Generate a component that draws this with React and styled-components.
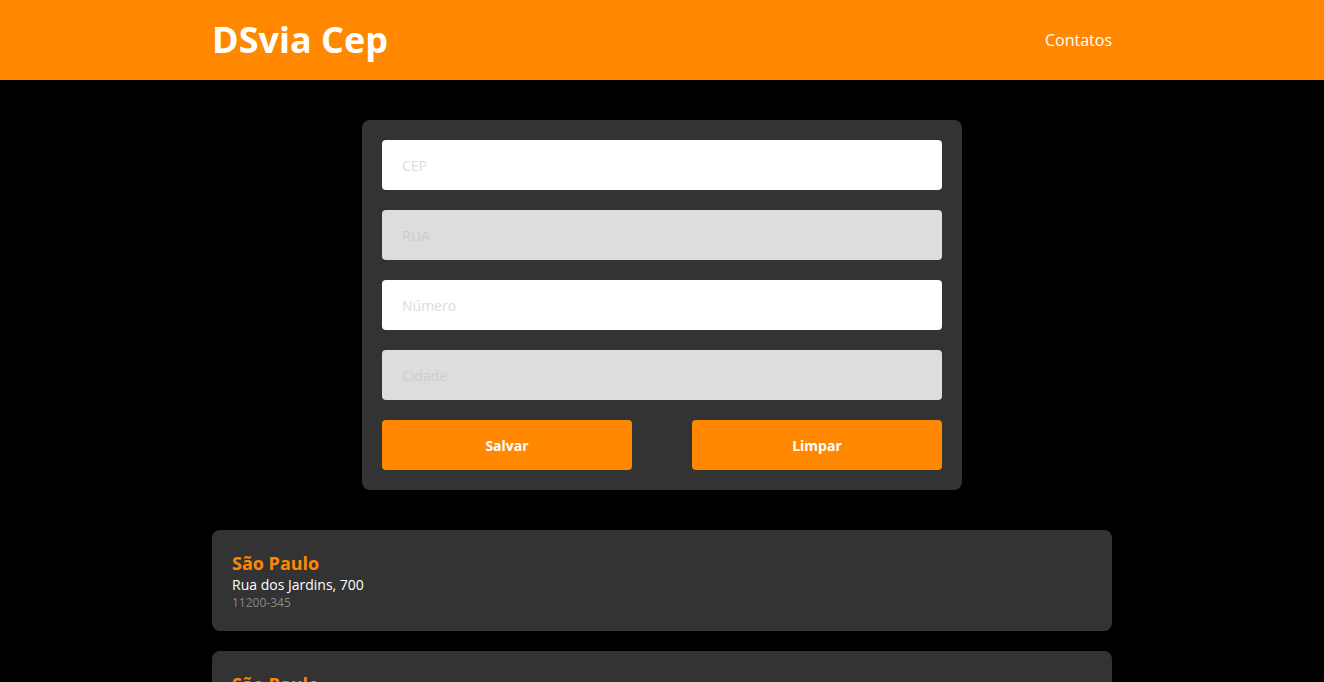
import React from 'react'
import styled, { createGlobalStyle } from 'styled-components'

const GlobalStyle = createGlobalStyle`
	* {
		margin: 0;
		padding: 0;
		box-sizing: border-box;
	}

	body {
		background-color: #000;
		font-family: 'Open Sans', 'Noto Sans', sans-serif;
		color: #fff;
	}
`

const contatos = [
	{ cidade: 'São Paulo', rua: 'Rua dos Jardins, 700', cep: '11200-345' },
	{ cidade: 'São Paulo', rua: 'Rua dos Jardins, 700', cep: '11200-345' }
]

const App = () => {
	return (
		<>
			<GlobalStyle />
			<Header>
				<div className="container">
					<h1>DSvia Cep</h1>
					<nav>
						<a href="#">Contatos</a>
					</nav>
				</div>
			</Header>

			<Main>
				<Form onSubmit={(e) => e.preventDefault()}>
					<Input type="text" placeholder="CEP" />
					<Input type="text" placeholder="RUA" disabled />
					<Input type="text" placeholder="Número" />
					<Input type="text" placeholder="Cidade" disabled />

					<Buttons>
						<Button type="submit">Salvar</Button>
						<Button type="reset">Limpar</Button>
					</Buttons>
				</Form>

				<List>
					{contatos.map((c, i) => (
						<Card key={i}>
							<h3>{c.cidade}</h3>
							<p>{c.rua}</p>
							<span>{c.cep}</span>
						</Card>
					))}
				</List>
			</Main>
		</>
	)
}

export default App

const Header = styled.header`
	background-color: #ff8800;
	height: 80px;

	.container {
		max-width: 900px;
		height: 100%;
		margin: 0 auto;
		display: flex;
		align-items: center;
		justify-content: space-between;

		h1 {
			font-size: 36px;
			font-weight: 700;
			line-height: 1;
		}

		a {
			color: #fff;
			text-decoration: none;
			font-size: 16px;
		}
	}
`

const Main = styled.main`
	max-width: 900px;
	margin: 40px auto 0;
	display: flex;
	flex-direction: column;
	align-items: center;
	gap: 40px;
`

const Form = styled.form`
	width: 600px;
	background-color: #333;
	border-radius: 8px;
	padding: 20px;
	display: flex;
	flex-direction: column;
	gap: 20px;
`

const Input = styled.input`
	height: 50px;
	border: none;
	border-radius: 4px;
	padding: 0 20px;
	font-family: inherit;
	font-size: 14px;
	background-color: ${({ disabled }) => (disabled ? '#ddd' : '#fff')};
	outline: none;

	&::placeholder {
		color: #ddd;
	}

	&:disabled::placeholder {
		color: #ccc;
	}
`

const Buttons = styled.div`
	display: flex;
	justify-content: space-between;
`

const Button = styled.button`
	width: 250px;
	height: 50px;
	border: none;
	border-radius: 4px;
	background-color: #ff8800;
	color: #fff;
	font-family: inherit;
	font-size: 14px;
	font-weight: 700;
	cursor: pointer;
`

const List = styled.ul`
	width: 100%;
	list-style: none;
	display: flex;
	flex-direction: column;
	gap: 20px;
`

const Card = styled.li`
	background-color: #333;
	border-radius: 8px;
	padding: 21px 20px 20px;

	h3 {
		color: #ff8800;
		font-size: 18px;
		line-height: 24px;
		font-weight: 700;
	}

	p {
		font-size: 14px;
		line-height: 19px;
	}

	span {
		display: block;
		font-size: 12px;
		line-height: 17px;
		color: #888;
	}
`
